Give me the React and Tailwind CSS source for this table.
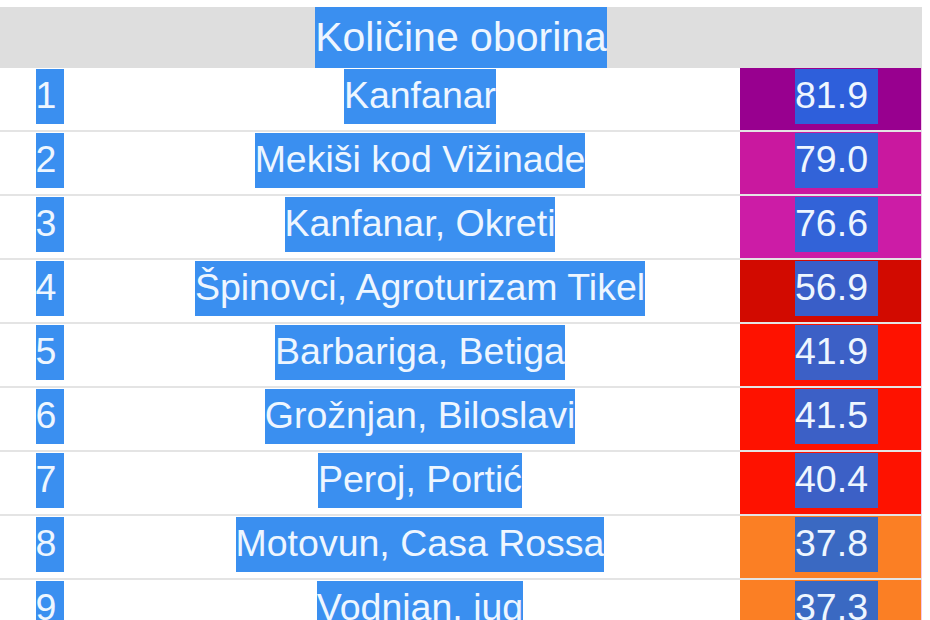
const rows = [
  { n: 1, name: 'Kanfanar', value: '81.9', cell: 'bg-[#98008f]', sel: 'bg-[#2e5fdb]' },
  { n: 2, name: 'Mekiši kod Vižinade', value: '79.0', cell: 'bg-[#c9189f]', sel: 'bg-[#3263d8]' },
  { n: 3, name: 'Kanfanar, Okreti', value: '76.6', cell: 'bg-[#cc1ca6]', sel: 'bg-[#3263d8]' },
  { n: 4, name: 'Špinovci, Agroturizam Tikel', value: '56.9', cell: 'bg-[#d20a00]', sel: 'bg-[#395ec8]' },
  { n: 5, name: 'Barbariga, Betiga', value: '41.9', cell: 'bg-[#fe1200]', sel: 'bg-[#3c60c6]' },
  { n: 6, name: 'Grožnjan, Biloslavi', value: '41.5', cell: 'bg-[#fe1200]', sel: 'bg-[#3c60c6]' },
  { n: 7, name: 'Peroj, Portić', value: '40.4', cell: 'bg-[#fe1200]', sel: 'bg-[#3c60c6]' },
  { n: 8, name: 'Motovun, Casa Rossa', value: '37.8', cell: 'bg-[#fb7f24]', sel: 'bg-[#3a69c2]' },
  { n: 9, name: 'Vodnjan, jug', value: '37.3', cell: 'bg-[#fb7f24]', sel: 'bg-[#3a69c2]' },
];

// highlighted (selected-looking) text chip
function Sel({ children, className = '' }) {
  return (
    <span className={`mt-[1px] inline-block h-[55px] leading-[52px] whitespace-nowrap text-[#eef6ff] ${className}`}>
      {children}
    </span>
  );
}

export default function App() {
  return (
    <div className="h-[620px] w-[930px] overflow-hidden bg-white pt-[7px] font-['Liberation_Sans',Arial,sans-serif]">
      <div className="w-[922px]">
        <div className="flex h-[61px] justify-center bg-[#dedede]">
          <span className="h-full whitespace-nowrap bg-[#3a8ff0] text-[41px] leading-[61px] text-[#eef6ff]">
            Količine oborina
          </span>
        </div>

        {rows.map(r => (
          <div key={r.n} className="flex h-[64px] border-b-2 border-[#e4e4e4] text-[37.5px]">
            <div className="flex w-[100px] justify-center">
              <Sel className="bg-[#3a8ff0] pr-[8px]">{r.n}</Sel>
            </div>
            <div className="flex flex-1 justify-center">
              <Sel className="bg-[#3a8ff0]">{r.name}</Sel>
            </div>
            <div className={`flex w-[182px] justify-center border-r border-[#f4c8ec] pl-[12px] ${r.cell}`}>
              <Sel className={`pr-[10px] ${r.sel}`}>{r.value}</Sel>
            </div>
          </div>
        ))}
      </div>
    </div>
  );
}
